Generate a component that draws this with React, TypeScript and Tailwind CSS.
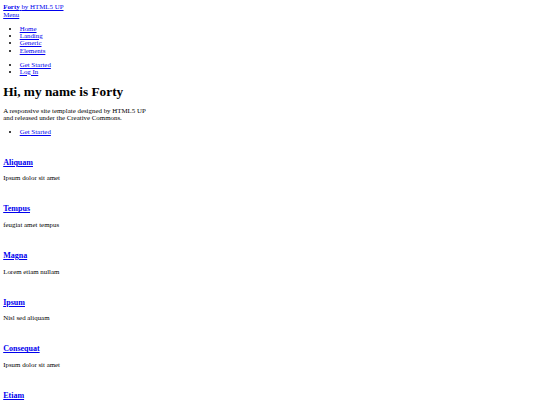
const menu = ['Home', 'Landing', 'Generic', 'Elements']

const tiles = [
  ['Aliquam', 'Ipsum dolor sit amet'],
  ['Tempus', 'feugiat amet tempus'],
  ['Magna', 'Lorem etiam nullam'],
  ['Ipsum', 'Nisl sed aliquam'],
  ['Consequat', 'Ipsum dolor sit amet'],
  ['Etiam', 'Tempus aliquam veroeros'],
]

const link = 'text-[#0000ee] underline'

export default function App() {
  return (
    <div className="h-screen overflow-hidden bg-white p-[3.2px] font-['Liberation_Serif',serif] text-[6.9px] leading-[7.36px] text-black">
      <header>
        <a href="#" className={link}>
          <strong>Forty</strong> <span>by HTML5 UP</span>
        </a>
        <nav>
          <a href="#" className={link}>Menu</a>
        </nav>
      </header>

      <ul className="my-[6.6px] list-disc pl-[16.5px]">
        {menu.map(m => (
          <li key={m}><a href="#" className={link}>{m}</a></li>
        ))}
      </ul>
      <ul className="my-[6.4px] list-disc pl-[16.5px]">
        <li><a href="#" className={link}>Get Started</a></li>
        <li><a href="#" className={link}>Log In</a></li>
      </ul>

      <section>
        <h1 className="mt-[10px] mb-[6.6px] text-[13.3px] leading-[14.7px] font-bold">Hi, my name is Forty</h1>
        <p className="my-[6.4px]">
          A responsive site template designed by HTML5 UP<br />
          and released under the Creative Commons.
        </p>
        <ul className="my-[6.4px] list-disc pl-[16.5px]">
          <li><a href="#" className={link}>Get Started</a></li>
        </ul>
      </section>

      <section>
        {tiles.map(([title, text]) => (
          <article key={title} className="pt-[9.8px]">
            <h3 className="mt-[7.5px] mb-[7px] text-[8px] leading-[8.6px] font-bold">
              <a href="#" className={link}>{title}</a>
            </h3>
            <p className="my-[6.4px]">{text}</p>
          </article>
        ))}
      </section>
    </div>
  )
}
